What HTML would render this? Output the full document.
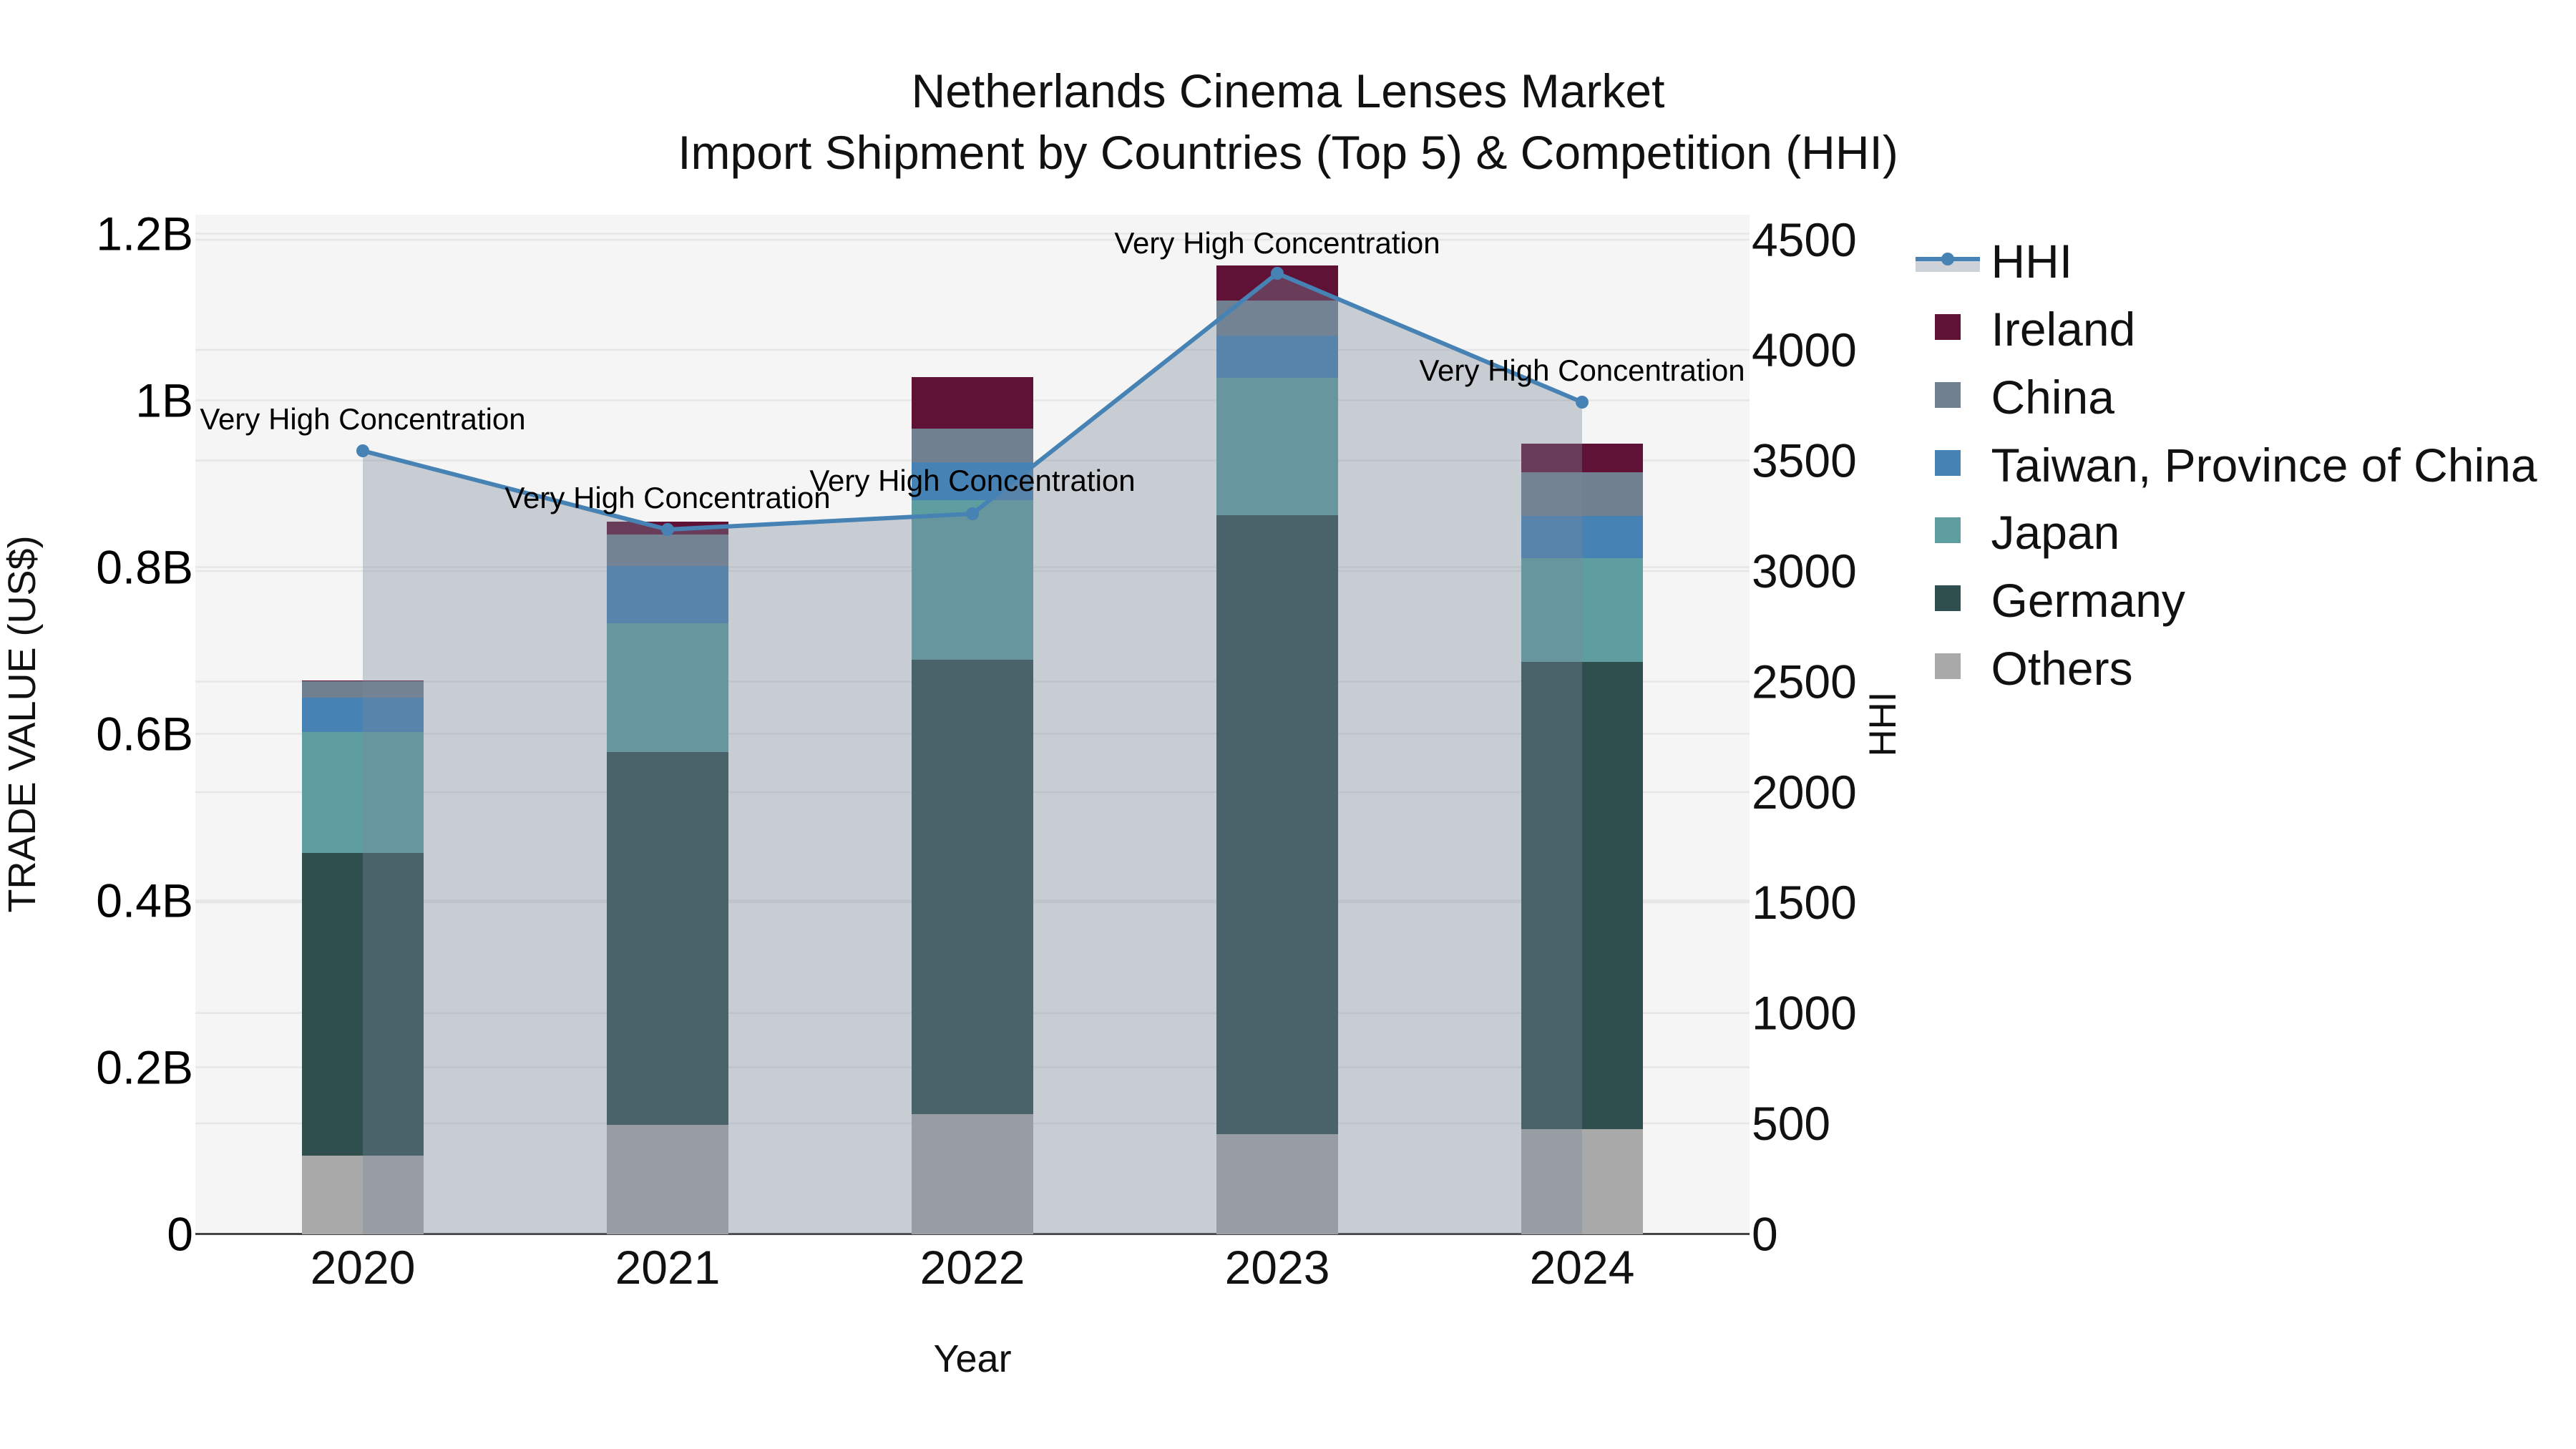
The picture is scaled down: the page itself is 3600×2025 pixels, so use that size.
<!DOCTYPE html>
<html lang="en">
<head>
<meta charset="utf-8">
<title>Netherlands Cinema Lenses Market</title>
<style>
html,body{margin:0;padding:0;background:#fff;width:3600px;height:2025px;overflow:hidden}
svg{display:block;font-family:"Liberation Sans",Arial,sans-serif}
</style>
</head>
<body>
<svg width="3600" height="2025" viewBox="0 0 3600 2025" xmlns="http://www.w3.org/2000/svg">
<rect width="3600" height="2025" fill="#fff"/>
<rect x="273" y="300" width="2172" height="1425" fill="#f5f5f5"/>
<!-- gridlines -->
<g stroke="#e6e6e6" stroke-width="2.6">
<path d="M273 1491.5H2445M273 1258.5H2445M273 1025.5H2445M273 792.5H2445M273 559.5H2445M273 326.5H2445"/>
<path d="M273 1570H2445M273 1415.7H2445M273 1261H2445M273 1107H2445M273 952.5H2445M273 798H2445M273 643.6H2445M273 489H2445M273 335H2445"/>
</g>
<rect x="273" y="1723" width="2172" height="3" fill="#444"/>
<!-- bars -->
<g shape-rendering="crispEdges">
<!-- 2020 -->
<rect x="422" y="951" width="170" height="1" fill="#601236"/>
<rect x="422" y="952" width="170" height="23" fill="#708090"/>
<rect x="422" y="975" width="170" height="48" fill="#4682b4"/>
<rect x="422" y="1023" width="170" height="169" fill="#5f9ea0"/>
<rect x="422" y="1192" width="170" height="423" fill="#2f4f4f"/>
<rect x="422" y="1615" width="170" height="110" fill="#a9a9a9"/>
<!-- 2021 -->
<rect x="848" y="729" width="170" height="18" fill="#601236"/>
<rect x="848" y="747" width="170" height="44" fill="#708090"/>
<rect x="848" y="791" width="170" height="80" fill="#4682b4"/>
<rect x="848" y="871" width="170" height="180" fill="#5f9ea0"/>
<rect x="848" y="1051" width="170" height="521" fill="#2f4f4f"/>
<rect x="848" y="1572" width="170" height="153" fill="#a9a9a9"/>
<!-- 2022 -->
<rect x="1274" y="527" width="170" height="72" fill="#601236"/>
<rect x="1274" y="599" width="170" height="47" fill="#708090"/>
<rect x="1274" y="646" width="170" height="53" fill="#4682b4"/>
<rect x="1274" y="699" width="170" height="223" fill="#5f9ea0"/>
<rect x="1274" y="922" width="170" height="635" fill="#2f4f4f"/>
<rect x="1274" y="1557" width="170" height="168" fill="#a9a9a9"/>
<!-- 2023 -->
<rect x="1700" y="371" width="170" height="49" fill="#601236"/>
<rect x="1700" y="420" width="170" height="49" fill="#708090"/>
<rect x="1700" y="469" width="170" height="59" fill="#4682b4"/>
<rect x="1700" y="528" width="170" height="192" fill="#5f9ea0"/>
<rect x="1700" y="720" width="170" height="865" fill="#2f4f4f"/>
<rect x="1700" y="1585" width="170" height="140" fill="#a9a9a9"/>
<!-- 2024 -->
<rect x="2126" y="620" width="170" height="40" fill="#601236"/>
<rect x="2126" y="660" width="170" height="61" fill="#708090"/>
<rect x="2126" y="721" width="170" height="59" fill="#4682b4"/>
<rect x="2126" y="780" width="170" height="145" fill="#5f9ea0"/>
<rect x="2126" y="925" width="170" height="653" fill="#2f4f4f"/>
<rect x="2126" y="1578" width="170" height="147" fill="#a9a9a9"/>
</g>
<!-- HHI area -->
<polygon points="507,630 933,740 1359,718 1785,382 2211,562 2211,1724.5 507,1724.5" fill="rgb(122,135,154)" fill-opacity="0.36"/>
<polyline points="507,630 933,740 1359,718 1785,382 2211,562" fill="none" stroke="#4682b4" stroke-width="6" stroke-linejoin="round"/>
<g fill="#4682b4">
<circle cx="507" cy="630" r="9"/><circle cx="933" cy="740" r="9"/><circle cx="1359" cy="718" r="9"/><circle cx="1785" cy="382" r="9"/><circle cx="2211" cy="562" r="9"/>
</g>
<!-- annotations -->
<g font-size="42" fill="#000" text-anchor="middle">
<text x="507" y="600">Very High Concentration</text>
<text x="933" y="710">Very High Concentration</text>
<text x="1359" y="686">Very High Concentration</text>
<text x="1785" y="354">Very High Concentration</text>
<text x="2211" y="532">Very High Concentration</text>
</g>
<!-- title -->
<g font-size="66" fill="#111" text-anchor="middle">
<text x="1800" y="150">Netherlands Cinema Lenses Market</text>
<text x="1800" y="236">Import Shipment by Countries (Top 5) &amp; Competition (HHI)</text>
</g>
<!-- left ticks -->
<g font-size="66" fill="#000" text-anchor="end">
<text x="270" y="349.5">1.2B</text>
<text x="270" y="582.5">1B</text>
<text x="270" y="815.5">0.8B</text>
<text x="270" y="1048.5">0.6B</text>
<text x="270" y="1281.5">0.4B</text>
<text x="270" y="1514.5">0.2B</text>
<text x="270" y="1747.5">0</text>
</g>
<!-- right ticks -->
<g font-size="66" fill="#111">
<text x="2448" y="358">4500</text>
<text x="2448" y="512">4000</text>
<text x="2448" y="666.5">3500</text>
<text x="2448" y="821">3000</text>
<text x="2448" y="975.5">2500</text>
<text x="2448" y="1130">2000</text>
<text x="2448" y="1284">1500</text>
<text x="2448" y="1438.5">1000</text>
<text x="2448" y="1593">500</text>
<text x="2448" y="1747.5">0</text>
</g>
<!-- x ticks -->
<g font-size="66" fill="#111" text-anchor="middle">
<text x="507" y="1794">2020</text>
<text x="933" y="1794">2021</text>
<text x="1359" y="1794">2022</text>
<text x="1785" y="1794">2023</text>
<text x="2211" y="1794">2024</text>
</g>
<!-- axis titles -->
<g font-size="52.8" fill="#111" text-anchor="middle">
<text x="1359" y="1917" font-size="54">Year</text>
<text font-size="54" transform="translate(49 1012) rotate(-90)">TRADE VALUE (US$)</text>
<text transform="translate(2649 1012) rotate(-90)">HHI</text>
</g>
<!-- legend -->
<rect x="2677" y="362" width="90" height="18" fill="#cdd2d9"/>
<rect x="2677" y="359" width="90" height="6" fill="#4682b4"/>
<circle cx="2722" cy="362" r="9" fill="#4682b4"/>
<g shape-rendering="crispEdges">
<rect x="2704" y="439" width="36" height="36" fill="#601236"/>
<rect x="2704" y="534" width="36" height="36" fill="#708090"/>
<rect x="2704" y="629" width="36" height="36" fill="#4682b4"/>
<rect x="2704" y="723" width="36" height="36" fill="#5f9ea0"/>
<rect x="2704" y="818" width="36" height="36" fill="#2f4f4f"/>
<rect x="2704" y="913" width="36" height="36" fill="#a9a9a9"/>
</g>
<g font-size="66" fill="#111">
<text x="2782.5" y="388">HHI</text>
<text x="2782.5" y="483">Ireland</text>
<text x="2782.5" y="578">China</text>
<text x="2782.5" y="673">Taiwan, Province of China</text>
<text x="2782.5" y="767">Japan</text>
<text x="2782.5" y="862">Germany</text>
<text x="2782.5" y="957">Others</text>
</g>
</svg>
</body>
</html>
